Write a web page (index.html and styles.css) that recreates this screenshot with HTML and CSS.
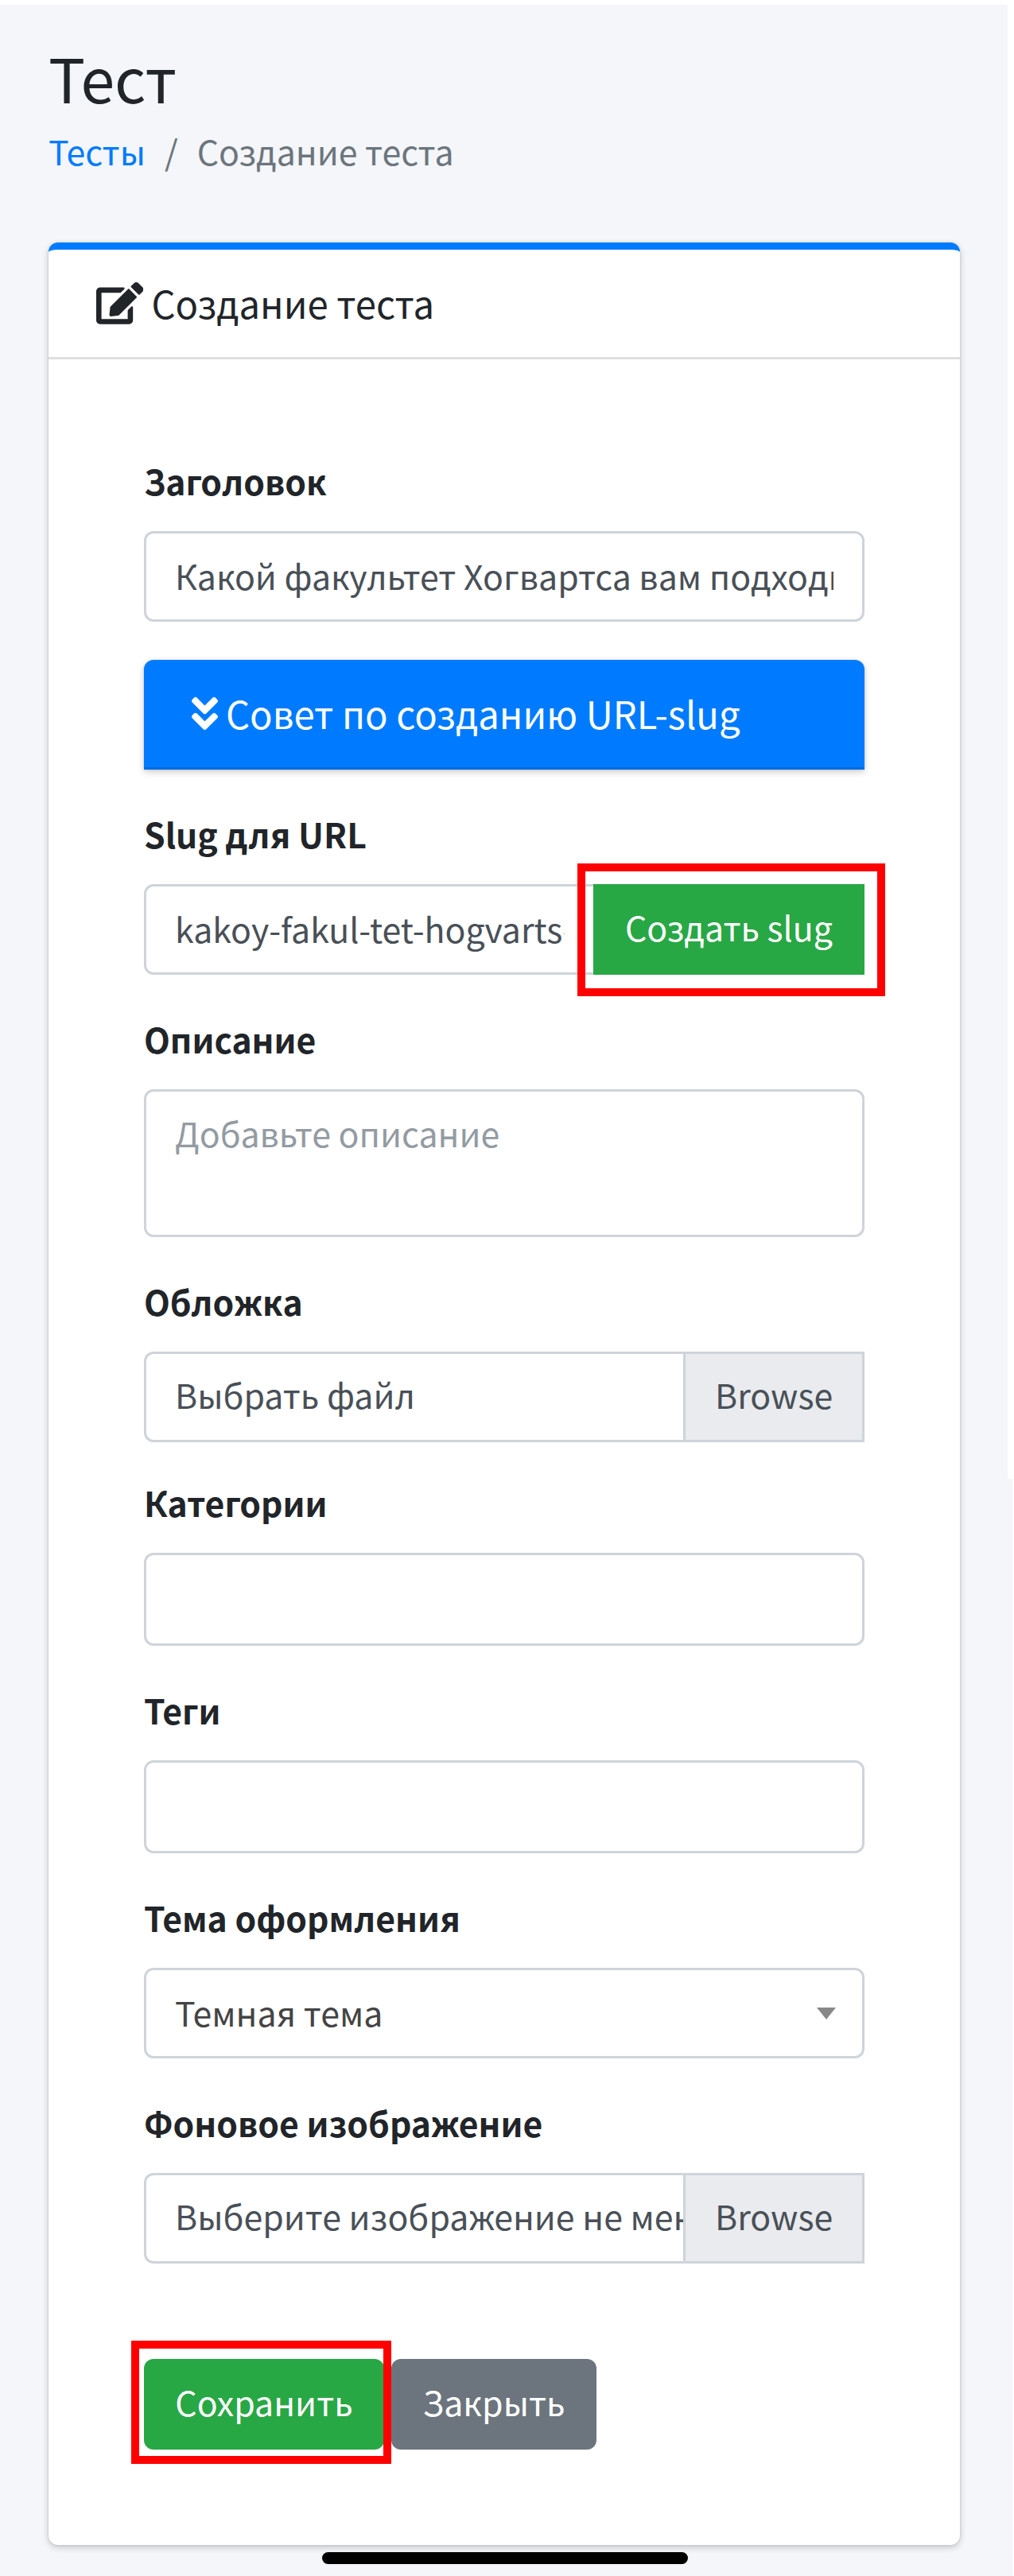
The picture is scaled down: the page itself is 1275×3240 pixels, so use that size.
FILE: index.html
```html
<!DOCTYPE html>
<html lang="ru">
<head>
<meta charset="utf-8">
<title>Создание теста</title>
<link rel="stylesheet" href="styles.css">
</head>
<body>
<main class="page">
  <header class="page-header">
    <h1 class="page-title">Тест</h1>
    <nav class="breadcrumb">
      <a class="crumb-link" href="#">Тесты</a>
      <span class="crumb-sep">/</span>
      <span>Создание теста</span>
    </nav>
  </header>

  <section class="card">
    <div class="card-header">
      <svg class="icon-edit" viewBox="0 0 576 512"><path fill="currentColor" d="M402.6 83.2l90.2 90.2c3.8 3.8 3.8 10 0 13.8L274.4 405.6l-92.8 10.3c-12.4 1.4-22.9-9.1-21.5-21.5l10.3-92.8L388.8 83.2c3.8-3.8 10-3.8 13.8 0zm162-22.9l-48.8-48.8c-15.2-15.2-39.9-15.2-55.2 0l-35.4 35.4c-3.8 3.8-3.8 10 0 13.8l90.2 90.2c3.8 3.8 10 3.8 13.8 0l35.4-35.4c15.2-15.3 15.2-40 0-55.2zM384 346.2V448H64V128h229.8c3.2 0 6.2-1.3 8.5-3.5l40-40c7.6-7.6 2.2-20.5-8.5-20.5H48C21.5 64 0 85.5 0 112v352c0 26.5 21.5 48 48 48h352c26.5 0 48-21.5 48-48V306.2c0-10.7-12.9-16-20.5-8.5l-40 40c-2.2 2.3-3.5 5.3-3.5 8.5z"/></svg>
      <h2 class="card-title">Создание теста</h2>
    </div>
    <form class="card-body">
      <div class="group">
        <label class="label">Заголовок</label>
        <div class="control"><span class="value">Какой факультет Хогвартса вам подходит</span></div>
      </div>

      <div class="tip">
        <svg class="icon-down" viewBox="0 0 320 512"><path fill="currentColor" d="M143 256.3L7 120.3c-9.4-9.4-9.4-24.6 0-33.9l22.6-22.6c9.4-9.4 24.6-9.4 33.9 0l96.4 96.4 96.4-96.4c9.4-9.4 24.6-9.4 33.9 0L313 86.3c9.4 9.4 9.4 24.6 0 33.9l-136 136c-9.4 9.5-24.6 9.5-34 .1zm34 192l136-136c9.4-9.4 9.4-24.6 0-33.9l-22.6-22.6c-9.4-9.4-24.6-9.4-33.9 0L160 352.1l-96.4-96.4c-9.4-9.4-24.6-9.4-33.9 0L7 278.3c-9.4 9.4-9.4 24.6 0 33.9l136 136c9.4 9.5 24.6 9.5 34 .1z"/></svg>
        <span class="tip-title">Совет по созданию URL-slug</span>
      </div>

      <div class="group">
        <label class="label">Slug для URL</label>
        <div class="input-group">
          <div class="control control-joined"><span class="value">kakoy-fakul-tet-hogvarts-vam</span></div>
          <button class="btn btn-success btn-append" type="button">Создать slug</button>
          <span class="marker marker-slug"></span>
        </div>
      </div>

      <div class="group">
        <label class="label">Описание</label>
        <div class="control control-area"><span class="value placeholder">Добавьте описание</span></div>
      </div>

      <div class="group group-cover">
        <label class="label">Обложка</label>
        <div class="file">
          <div class="control control-file"><span class="value">Выбрать файл</span></div>
          <span class="browse">Browse</span>
        </div>
      </div>

      <div class="group">
        <label class="label">Категории</label>
        <div class="control control-multi"></div>
      </div>

      <div class="group">
        <label class="label">Теги</label>
        <div class="control control-multi"></div>
      </div>

      <div class="group">
        <label class="label">Тема оформления</label>
        <div class="control control-select"><span class="value">Темная тема</span><span class="caret"></span></div>
      </div>

      <div class="group">
        <label class="label">Фоновое изображение</label>
        <div class="file">
          <div class="control control-file"><span class="value">Выберите изображение не менее</span></div>
          <span class="browse">Browse</span>
        </div>
      </div>

      <div class="actions">
        <button class="btn btn-success btn-save" type="button">Сохранить</button>
        <button class="btn btn-secondary" type="button">Закрыть</button>
        <span class="marker marker-save"></span>
      </div>
    </form>
  </section>
  <div class="home-indicator"></div>
</main>
</body>
</html>
```
FILE: styles.css
```css
* {
  box-sizing: border-box;
}

body {
  margin: 0;
  height: 3240px;
  overflow: hidden;
  background:
    linear-gradient(#f4f6f9, #f4f6f9) 0 6px / 1267px 1854px no-repeat,
    linear-gradient(#f4f6f9, #f4f6f9) 0 1860px / 1273px 1380px no-repeat,
    #fff;
  color: #212529;
  font-family: "Noto Sans CJK SC", "Noto Sans", sans-serif;
  font-size: 42.85px;
}

.page {
  position: relative;
  width: 1267px;
  height: 3240px;
  padding: 47px 60px 0 61px;
}

.page-header {
  height: 258px;
}

.page-title {
  margin: 0;
  font-size: 77px;
  font-weight: 400;
  line-height: 99px;
}

.breadcrumb {
  display: flex;
  gap: 24px;
  line-height: 60px;
  margin-top: 13px;
  color: #6c757d;
}

.crumb-link {
  color: #007bff;
  text-decoration: none;
}

.card {
  height: 2896px;
  background: #fff;
  border-top: 9px solid #007bff;
  border-radius: 12px;
  box-shadow: 0 0 3px rgba(0, 0, 0, .125), 0 3px 9px rgba(0, 0, 0, .2);
}

.card-header {
  display: flex;
  height: 138px;
  padding: 0 60px;
  border-bottom: 3px solid #dfdfdf;
}

.icon-edit {
  width: 59.4px;
  height: 52.8px;
  margin: 41px 10px 0 0;
}

.card-title {
  margin: 0;
  font-size: 47.2px;
  font-weight: 400;
  line-height: 134px;
}

.card-body {
  padding: 120px;
}

.group {
  margin-bottom: 48px;
}

.group-cover {
  margin-bottom: 43px;
}

.label {
  display: block;
  height: 72px;
  margin-bottom: 24px;
  font-size: 42.7px;
  font-weight: 700;
  line-height: 64px;
}

.control {
  height: 114px;
  padding: 0 36px;
  background: #fff;
  border: 3px solid #ced4da;
  border-radius: 12px;
  color: #495057;
  line-height: 104px;
}

.value {
  display: block;
  overflow: hidden;
  white-space: nowrap;
}

.tip {
  display: flex;
  height: 138px;
  margin-bottom: 48px;
  padding: 0 60px;
  background: #007bff;
  border-bottom: 3px solid #006cdf;
  border-radius: 12px 12px 0 0;
  box-shadow: 0 0 3px rgba(0, 0, 0, .125), 0 3px 9px rgba(0, 0, 0, .2);
  color: #fff;
}

.icon-down {
  width: 33px;
  height: 52.8px;
  margin: 41px 10px 0 0;
}

.tip-title {
  font-size: 47.2px;
  line-height: 134px;
}

.input-group {
  position: relative;
  display: flex;
}

.control-joined {
  flex: 1;
  min-width: 0;
  margin-right: -3px;
  border-radius: 12px 0 0 12px;
}

.btn {
  height: 114px;
  padding: 0 39px 8px;
  border: 0;
  border-radius: 12px;
  color: #fff;
  font: inherit;
  white-space: nowrap;
}

.btn-success {
  background: #28a745;
}

.btn-secondary {
  width: 258px;
  background: #6c757d;
}

.btn-append {
  width: 341px;
  border-radius: 0;
  z-index: 1;
}

.control-area {
  height: 186px;
  line-height: 102px;
}

.placeholder {
  color: #939ba2;
}

.file {
  display: flex;
}

.control-file {
  flex: 1;
  min-width: 0;
  padding-right: 0;
  border-right: 0;
  border-radius: 12px 0 0 12px;
  line-height: 101px;
}

.browse {
  width: 228px;
  height: 114px;
  padding-left: 37px;
  background: #e9ebee;
  border: 3px solid #ced4da;
  color: #495057;
  line-height: 101px;
}

.control-multi {
  height: 117px;
}

.control-select {
  display: flex;
  align-items: center;
  justify-content: space-between;
  padding-right: 33px;
  color: #444;
}

.control-select .value {
  padding-bottom: 4px;
}

.caret {
  border: 12px solid transparent;
  border-top: 15px solid #888;
  border-bottom: 0;
}

.actions {
  position: relative;
  display: flex;
  gap: 9px;
  padding-top: 72px;
}

.btn-save {
  width: 302px;
}

.marker {
  position: absolute;
  z-index: 2;
  border: 10px solid #f00;
}

.marker-slug {
  top: -26px;
  right: -26px;
  width: 387px;
  height: 167px;
}

.marker-save {
  top: 49px;
  left: -16px;
  width: 327px;
  height: 155px;
}

.home-indicator {
  position: absolute;
  left: 405px;
  top: 3210px;
  width: 460px;
  height: 15px;
  border-radius: 8px;
  background: #000;
}
```
